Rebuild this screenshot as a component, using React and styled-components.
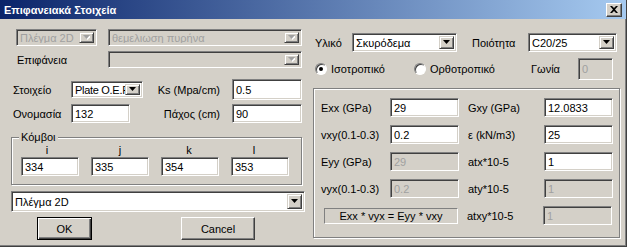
import React from 'react';
import styled, { createGlobalStyle } from 'styled-components';

const GlobalStyle = createGlobalStyle`
  html, body {
    margin: 0;
    padding: 0;
    background: #d4d0c8;
    overflow: hidden;
  }
  * {
    box-sizing: border-box;
  }
`;

const Window = styled.div`
  width: 627px;
  height: 247px;
  background: #d4d0c8;
  font-family: 'Liberation Sans', Arial, sans-serif;
  font-size: 11px;
  color: #000;
  border-right: 1px solid #404040;
  border-bottom: 1px solid #404040;
  box-shadow: inset -1px -1px #808080;
  display: flex;
  flex-direction: column;
`;

const TitleBar = styled.div`
  height: 19px;
  display: flex;
  align-items: center;
  justify-content: space-between;
  padding: 0 4px 0 4px;
  background: linear-gradient(to right, #0a246a, #a6caf0);
`;

const Title = styled.span`
  color: #fff;
  font-weight: bold;
  font-size: 11px;
`;

const CloseButton = styled.div`
  width: 16px;
  height: 14px;
  background: #d4d0c8;
  border: 1px solid;
  border-color: #fff #404040 #404040 #fff;
  box-shadow: inset -1px -1px #808080;
  display: grid;
  place-items: center;
`;

const Body = styled.div`
  display: flex;
  padding-top: 10px;
`;

const LeftCol = styled.div`
  margin-left: 11px;
  width: 295px;
  display: flex;
  flex-direction: column;
`;

const RightCol = styled.div`
  margin-left: 7px;
  width: 307px;
  display: flex;
  flex-direction: column;
`;

const Row = styled.div`
  display: flex;
  align-items: center;
  height: ${(p) => p.h || 17}px;
  margin-top: ${(p) => p.mt || 0}px;
  margin-left: ${(p) => p.ml || 0}px;
`;

const Label = styled.span`
  width: ${(p) => (p.w ? p.w + 'px' : 'auto')};
  flex: none;
  padding-left: ${(p) => p.pl || 0}px;
  padding-right: ${(p) => p.pr || 0}px;
  text-align: ${(p) => p.align || 'left'};
  white-space: nowrap;
`;

const Sunken = styled.div`
  border: 1px solid;
  border-color: #808080 #fff #fff #808080;
  box-shadow: inset 1px 1px #404040, inset -1px -1px #d4d0c8;
`;

const TextBox = styled(Sunken)`
  width: ${(p) => p.w}px;
  height: ${(p) => p.h || 19}px;
  margin-left: ${(p) => p.ml || 0}px;
  flex: none;
  background: ${(p) => (p.disabled ? '#d4d0c8' : '#fff')};
  color: ${(p) => (p.disabled ? '#a0a0a0' : '#000')};
  padding: 1px 3px;
  display: flex;
  align-items: center;
  white-space: nowrap;
  overflow: hidden;
`;

const ComboBox = styled(Sunken)`
  width: ${(p) => p.w}px;
  height: ${(p) => p.h || 17}px;
  margin-left: ${(p) => p.ml || 0}px;
  flex: none;
  background: ${(p) => (p.disabled ? '#d4d0c8' : '#fff')};
  color: ${(p) => (p.disabled ? '#a0a0a0' : '#000')};
  display: flex;
  align-items: stretch;
  padding: 2px;
`;

const ComboText = styled.span`
  flex: 1;
  min-width: 0;
  overflow: hidden;
  white-space: nowrap;
  padding-left: 1px;
  letter-spacing: ${(p) => p.ls || 0}px;
  display: flex;
  align-items: center;
`;

const ArrowButton = styled.div`
  width: 15px;
  flex: none;
  background: #d4d0c8;
  border: 1px solid;
  border-color: #d4d0c8 #404040 #404040 #d4d0c8;
  box-shadow: inset 1px 1px #fff, inset -1px -1px #808080;
  display: grid;
  place-items: center;
`;

const Arrow = ({ disabled }) => (
  <svg width="7" height="5" viewBox="0 0 7 5">
    {disabled && <path d="M1 1h7L4.5 5z" fill="#fff" />}
    <path d="M0 0h7L3.5 4z" fill={disabled ? '#a0a0a0' : '#000'} />
  </svg>
);

const Combo = ({ w, h, ml, ls, disabled, children }) => (
  <ComboBox w={w} h={h} ml={ml} disabled={disabled}>
    <ComboText ls={ls}>{children}</ComboText>
    <ArrowButton>
      <Arrow disabled={disabled} />
    </ArrowButton>
  </ComboBox>
);

const Etched = styled.div`
  border: 1px solid #808080;
  box-shadow: inset 1px 1px #fff, 1px 1px #fff;
`;

const GroupBox = styled(Etched)`
  width: 291px;
  height: 48px;
  margin-top: ${(p) => p.mt || 0}px;
  padding: 0 0 0 9px;
  display: flex;
  flex-direction: column;
`;

const GroupTitle = styled.span`
  align-self: flex-start;
  margin: -7px 0 0 -2px;
  padding: 0 2px;
  background: #d4d0c8;
  line-height: 13px;
`;

const NodeGrid = styled.div`
  display: grid;
  grid-template-columns: repeat(4, 58px);
  column-gap: 12px;
`;

const NodeHead = styled.span`
  text-align: center;
  line-height: 13px;
  height: 13px;
  margin-left: ${(p) => p.shift || 0}px;
`;

const ButtonRow = styled.div`
  display: flex;
  margin-top: 5px;
`;

const Button = styled.div`
  width: ${(p) => p.w}px;
  height: 23px;
  margin-left: ${(p) => p.ml || 0}px;
  display: grid;
  place-items: center;
  background: #d4d0c8;
  border: 1px solid;
  border-color: ${(p) => (p.def ? '#000' : '#fff #404040 #404040 #fff')};
  box-shadow: ${(p) =>
    p.def
      ? 'inset 1px 1px #fff, inset -1px -1px #404040, inset -2px -2px #808080'
      : 'inset -1px -1px #808080'};
`;

const Radio = styled.span`
  width: 12px;
  height: 12px;
  flex: none;
  border-radius: 50%;
  background: #fff;
  border: 1px solid;
  border-color: #808080 #fff #fff #808080;
  box-shadow: inset 1px 1px #404040;
  display: grid;
  place-items: center;
  margin-left: ${(p) => p.ml || 0}px;
  margin-right: 4px;
  &::after {
    content: '';
    width: 4px;
    height: 4px;
    border-radius: 50%;
    background: ${(p) => (p.checked ? '#000' : 'transparent')};
  }
`;

const Panel = styled(Etched)`
  margin-top: 8px;
  width: 307px;
  height: 150px;
  padding: 9px 8px 0 7px;
  display: flex;
  flex-direction: column;
  gap: 8px;
`;

const Formula = styled.div`
  width: 134px;
  height: 16px;
  margin-left: 3px;
  border: 1px solid;
  border-color: #808080 #fff #fff #808080;
  display: grid;
  place-items: center;
  flex: none;
`;

const props = [
  ['Exx (GPa)', '29', false, 'Gxy (GPa)', '12.0833', false],
  ['vxy(0.1-0.3)', '0.2', false, 'ε (kN/m3)', '25', false],
  ['Eyy (GPa)', '29', true, 'atx*10-5', '1', false],
  ['vyx(0.1-0.3)', '0.2', true, 'aty*10-5', '1', true],
];

export default function App() {
  return (
    <Window>
      <GlobalStyle />
      <TitleBar>
        <Title>Επιφανειακά Στοιχεία</Title>
        <CloseButton>
          <svg width="8" height="7" viewBox="0 0 8 7">
            <path d="M0 0h2l2 2 2-2h2L5 3.5 8 7H6L4 5 2 7H0l3-3.5z" fill="#000" />
          </svg>
        </CloseButton>
      </TitleBar>
      <Body>
        <LeftCol>
          <Row h={17}>
            <Combo w={81} ml={5} disabled>
              Πλέγμα 2D
            </Combo>
            <Combo w={194} ml={11} disabled>
              θεμελιωση πυρήνα
            </Combo>
          </Row>
          <Row h={17} mt={5}>
            <Label w={97} pl={6}>
              Επιφάνεια
            </Label>
            <Combo w={194} disabled />
          </Row>
          <Row h={21} mt={11}>
            <Label w={60} pl={2}>
              Στοιχείο
            </Label>
            <Combo w={72} ls={-0.3}>
              Plate O.E.F
            </Combo>
            <Label w={89} pr={12} align="right">
              Ks (Mpa/cm)
            </Label>
            <TextBox w={70} h={21}>
              0.5
            </TextBox>
          </Row>
          <Row h={19} mt={4}>
            <Label w={60} pl={2}>
              Ονομασία
            </Label>
            <TextBox w={59}>132</TextBox>
            <Label w={102} pr={12} align="right">
              Πάχος (cm)
            </Label>
            <TextBox w={70}>90</TextBox>
          </Row>
          <GroupBox mt={14}>
            <GroupTitle>Κόμβοι</GroupTitle>
            <NodeGrid>
              <NodeHead shift={-6}>i</NodeHead>
              <NodeHead>j</NodeHead>
              <NodeHead shift={-2}>k</NodeHead>
              <NodeHead shift={-12}>l</NodeHead>
              <TextBox w={58}>334</TextBox>
              <TextBox w={58}>335</TextBox>
              <TextBox w={58}>354</TextBox>
              <TextBox w={58}>353</TextBox>
            </NodeGrid>
          </GroupBox>
          <Row h={21} mt={6}>
            <Combo w={294} h={21}>
              Πλέγμα 2D
            </Combo>
          </Row>
          <ButtonRow>
            <Button w={55} ml={26} def>
              OK
            </Button>
            <Button w={74} ml={89}>
              Cancel
            </Button>
          </ButtonRow>
        </LeftCol>
        <RightCol>
          <Row h={19} mt={4}>
            <Label w={39} pl={2}>
              Υλικό
            </Label>
            <Combo w={105} h={19}>
              Σκυρόδεμα
            </Combo>
            <Label w={71} pl={15}>
              Ποιότητα
            </Label>
            <Combo w={89} h={19}>
              C20/25
            </Combo>
          </Row>
          <Row h={22} mt={6}>
            <Radio checked ml={2} />
            <Label w={82}>Ισοτροπικό</Label>
            <Radio ml={1} />
            <Label w={101}>Ορθοτροπικό</Label>
            <Label w={47}>Γωνία</Label>
            <TextBox w={35} h={22} disabled>
              0
            </TextBox>
          </Row>
          <Panel>
            {props.map(([l1, v1, d1, l2, v2, d2]) => (
              <Row h={19} key={l1}>
                <Label w={69}>{l1}</Label>
                <TextBox w={69} disabled={d1}>
                  {v1}
                </TextBox>
                <Label w={85} pl={9}>
                  {l2}
                </Label>
                <TextBox w={69} disabled={d2}>
                  {v2}
                </TextBox>
              </Row>
            ))}
            <Row h={19}>
              <Formula>Exx * vyx = Eyy * vxy</Formula>
              <Label w={85} pl={9}>
                atxy*10-5
              </Label>
              <TextBox w={69} disabled>
                1
              </TextBox>
            </Row>
          </Panel>
        </RightCol>
      </Body>
    </Window>
  );
}
